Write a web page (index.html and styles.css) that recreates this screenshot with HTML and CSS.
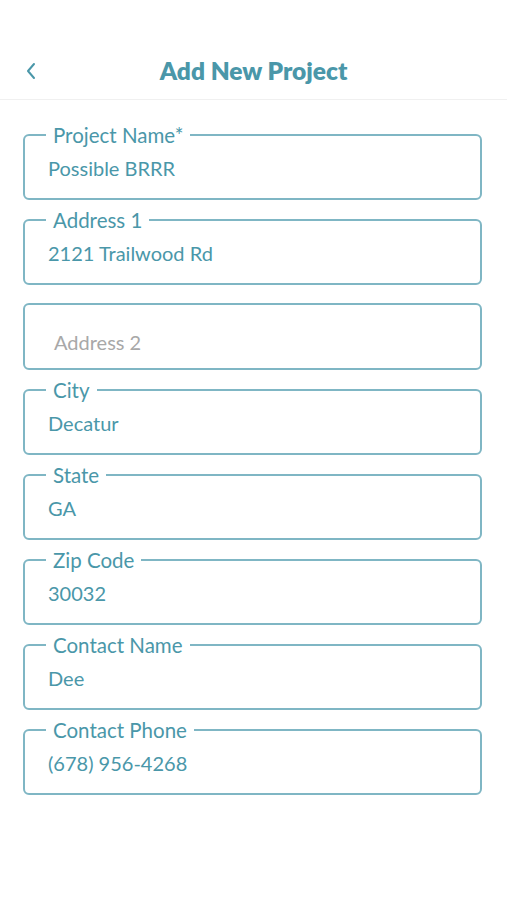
FILE: index.html
```html
<!DOCTYPE html>
<html lang="en">
<head>
    <meta charset="UTF-8">
    <meta name="viewport" content="width=device-width, initial-scale=1.0">
    <title>Add New Project</title>
    <link rel="stylesheet" href="styles.css">
</head>
<body>
    <div class="header">
        <button type="button" class="back-button">
            <svg width="12" height="18" viewBox="0 0 12 18"><path d="M9 2 L3 9 L9 16" fill="none" stroke="#4a97a9" stroke-width="2" stroke-linecap="round" stroke-linejoin="round"/></svg>
        </button>
        <h1>Add New Project</h1>
    </div>

    <form class="project-form">
        <fieldset class="field">
            <legend>Project Name*</legend>
            <div class="value">Possible BRRR</div>
        </fieldset>
        <fieldset class="field">
            <legend>Address 1</legend>
            <div class="value">2121 Trailwood Rd</div>
        </fieldset>
        <fieldset class="field empty">
            <div class="placeholder">Address 2</div>
        </fieldset>
        <fieldset class="field">
            <legend>City</legend>
            <div class="value">Decatur</div>
        </fieldset>
        <fieldset class="field">
            <legend>State</legend>
            <div class="value">GA</div>
        </fieldset>
        <fieldset class="field">
            <legend>Zip Code</legend>
            <div class="value">30032</div>
        </fieldset>
        <fieldset class="field">
            <legend>Contact Name</legend>
            <div class="value">Dee</div>
        </fieldset>
        <fieldset class="field">
            <legend>Contact Phone</legend>
            <div class="value">(678) 956-4268</div>
        </fieldset>
    </form>
</body>
</html>
```

FILE: styles.css
```css
body {
    margin: 0;
    font-family: Lato, "Open Sans", sans-serif;
    background-color: #fff;
    color: #4a97a9;
}
.header {
    height: 100px;
    display: flex;
    align-items: center;
    justify-content: center;
    position: relative;
    border-bottom: 1px solid #f0f0f0;
    box-sizing: border-box;
    padding-top: 58px;
    padding-bottom: 16px;
}
.header h1 {
    margin: 0;
    font-size: 24.5px;
    font-weight: 800;
    color: #4a97a9;
}
.back-button {
    position: absolute;
    left: 25px;
    top: 62px;
    background: none;
    border: none;
    padding: 0;
    cursor: pointer;
}
.project-form {
    padding: 24px 25px 0 23px;
}
.field {
    margin: 0 0 9px;
    padding: 10px 0 18px;
    border: 2px solid #7fb6c4;
    border-radius: 6px;
    min-width: 0;
}
.field legend {
    margin-left: 21px;
    padding: 0 7px;
    font-size: 20.5px;
    line-height: 22px;
    color: #4a97a9;
}
.value {
    padding-left: 23px;
    font-size: 20px;
    line-height: 24px;
}
.field.empty {
    margin-top: 18px;
    padding: 25px 0 14px;
}
.placeholder {
    padding-left: 29px;
    font-size: 20px;
    line-height: 24px;
    color: #a8a8a8;
}
```
